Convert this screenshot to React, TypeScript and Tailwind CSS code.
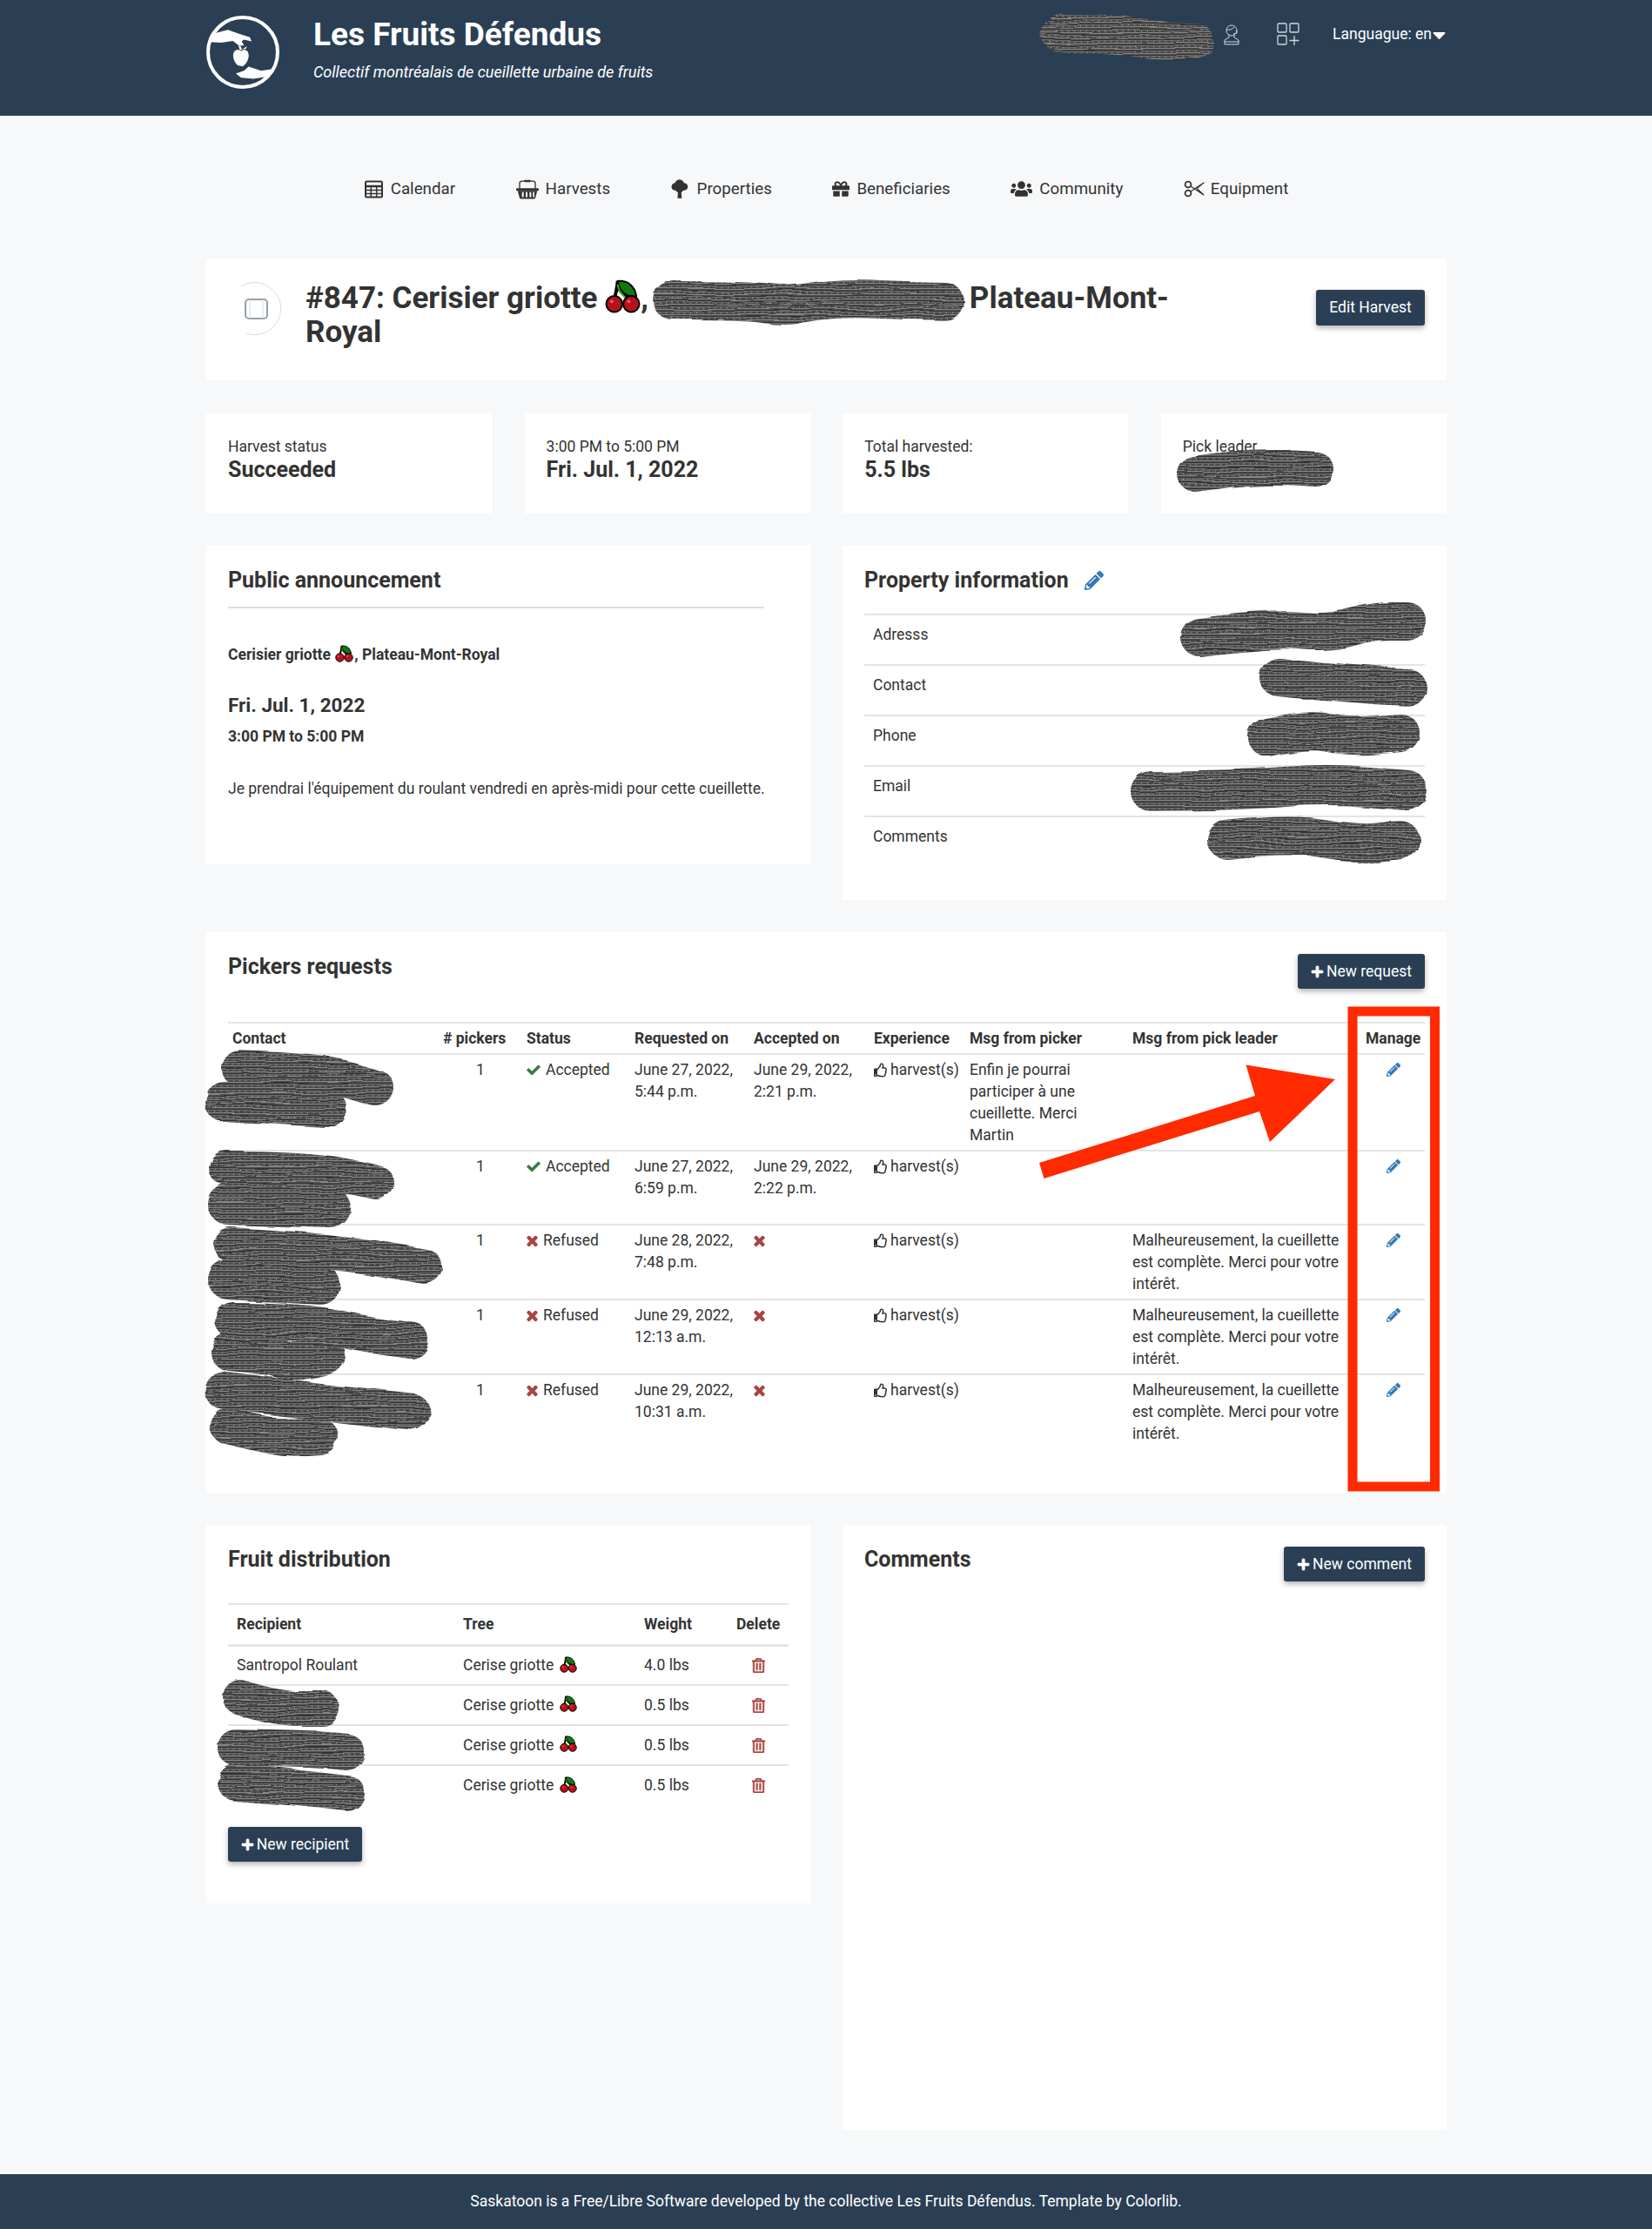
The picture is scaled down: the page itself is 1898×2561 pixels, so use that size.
import React from "react";
import {
  FaGift,
  FaUsers,
  FaPencilAlt,
  FaCheck,
  FaTimes,
  FaPlus,
  FaRegThumbsUp,
  FaRegTrashAlt,
  FaCaretDown,
} from "react-icons/fa";

const Cherry = ({ className }: { className: string }) => (
  <svg viewBox="0 0 40 40" className={`inline-block ${className}`}>
    <path d="M14 2 C13 12 12 18 9 25 M14 8 C17 16 24 20 29 25" fill="none" stroke="#000" strokeWidth="4" />
    <path d="M14 2 C24 1 34 6 36 20 C26 21 16 16 14 2Z" fill="#0f7a12" stroke="#000" strokeWidth="2" />
    <path d="M14 6 C15 14 19 18 26 24" fill="none" stroke="#35b31a" strokeWidth="2" />
    <circle cx="10" cy="29" r="9.5" fill="#b5121b" stroke="#000" strokeWidth="2" />
    <circle cx="30" cy="29" r="9.5" fill="#b5121b" stroke="#000" strokeWidth="2" />
    <circle cx="7" cy="26" r="2" fill="#ef5a68" />
    <circle cx="27" cy="26" r="2" fill="#ef5a68" />
  </svg>
);

const Logo = () => (
  <svg viewBox="21 24 250 250" className="h-[84px] w-[84px] shrink-0" fill="#fff">
    <circle cx="146" cy="149" r="119" fill="none" stroke="#fff" strokeWidth="12" />
    <path d="M36 88 L95 72 L130 85 L170 98 L176 112 L150 106 L142 112 L150 126 L132 126 L112 110 L72 116 L30 114Z" />
    <path d="M140 145 C150 136 166 140 166 160 C166 178 152 197 143 197 C140 197 138 195 135 195 C126 197 113 178 113 160 C113 140 130 136 140 145Z" />
    <path d="M136 142 L131 127 L138 127 L143 140Z M143 139 L160 129 L157 137Z" />
    <path d="M122 222 L150 212 L166 198 L208 212 L250 206 L232 232 L182 240 L140 236Z" />
  </svg>
);

const Calendar = () => (
  <svg viewBox="0 0 21 21" className="h-[21px] w-[21px] shrink-0" fill="none" stroke="#333">
    <rect x="1" y="1.5" width="19" height="18" rx="1.5" strokeWidth="2" />
    <path d="M1 7 H20" strokeWidth="2.5" />
    <path d="M1 11.5 H20 M1 15.5 H20 M7.3 7 V20 M13.7 7 V20" strokeWidth="1.5" />
  </svg>
);

const Basket = () => (
  <svg viewBox="0 0 78 68" className="h-[23px] w-[26px] shrink-0" fill="#333">
    <path d="M12 32 L12 14 Q12 6 20 6 L58 6 Q66 6 66 14 L66 32" fill="none" stroke="#333" strokeWidth="4" />
    <rect x="28" y="2" width="22" height="7" rx="2" />
    <rect x="0" y="30" width="78" height="9" rx="3" />
    <path d="M5 39 L73 39 L66 64 Q65 67 61 67 L17 67 Q13 67 12 64Z" />
    <path d="M20 44 h6 v17 h-6Z M33 44 h6 v17 h-6Z M46 44 h6 v17 h-6Z M58 44 h5 v17 h-5Z" fill="#f7f8fa" />
  </svg>
);

const Tree = () => (
  <svg viewBox="0 0 60 70" className="h-[23px] w-[20px] shrink-0" fill="#333">
    <circle cx="29" cy="17" r="16" />
    <circle cx="14" cy="26" r="13" />
    <circle cx="45" cy="26" r="13" />
    <circle cx="29" cy="32" r="15" />
    <path d="M24 40 L35 40 L37 66 L22 66Z" />
  </svg>
);

const Scissors = () => (
  <svg viewBox="0 0 24 20" className="h-[20px] w-[24px] shrink-0" fill="none" stroke="#333">
    <circle cx="5" cy="5" r="3.4" strokeWidth="1.8" />
    <circle cx="5" cy="15" r="3.4" strokeWidth="1.8" />
    <path d="M8 7 L23 17 L15 9.5 L23 3 L8 13" strokeWidth="1.2" strokeLinejoin="round" />
  </svg>
);

const Btn = ({ label, className }: { label: string; className: string }) => (
  <button className={`flex h-[40px] items-center justify-center gap-[3px] rounded-[3px] bg-[#2a3f54] text-white shadow-[0_3px_6px_rgba(0,0,0,0.3)] ${className}`}>
    <FaPlus className="h-[15px] w-[15px] stroke-[30]" />
    {label}
  </button>
);

const RedX = ({ className = "" }: { className?: string }) => (
  <FaTimes className={`h-[16px] w-[13px] stroke-[40] text-[#a94442] ${className}`} />
);

const nav = [
  { label: "Calendar", icon: <Calendar />, gap: "gap-[9px]" },
  { label: "Harvests", icon: <Basket />, gap: "gap-[8px]" },
  { label: "Properties", icon: <Tree />, gap: "gap-[10px]" },
  { label: "Beneficiaries", icon: <FaGift className="h-[20px] w-[20px]" />, gap: "gap-[8px]" },
  { label: "Community", icon: <FaUsers className="h-[24px] w-[25px]" />, gap: "gap-[8px]" },
  { label: "Equipment", icon: <Scissors />, gap: "gap-[7px]" },
];

const refuse = "Malheureusement, la cueillette est complète. Merci pour votre intérêt.";

const rows = [
  { ok: true, req: ["June 27, 2022,", "5:44 p.m."], acc: ["June 29, 2022,", "2:21 p.m."], picker: "Enfin je pourrai participer à une cueillette. Merci Martin", leader: "" },
  { ok: true, req: ["June 27, 2022,", "6:59 p.m."], acc: ["June 29, 2022,", "2:22 p.m."], picker: "", leader: "" },
  { ok: false, req: ["June 28, 2022,", "7:48 p.m."], acc: [], picker: "", leader: refuse },
  { ok: false, req: ["June 29, 2022,", "12:13 a.m."], acc: [], picker: "", leader: refuse },
  { ok: false, req: ["June 29, 2022,", "10:31 a.m."], acc: [], picker: "", leader: refuse },
];

const heads = [
  ["Contact", "w-[242px]"],
  ["# pickers", "w-[96px]"],
  ["Status", "w-[124px]"],
  ["Requested on", "w-[137px]"],
  ["Accepted on", "w-[138px]"],
  ["Experience", "w-[110px]"],
  ["Msg from picker", "w-[187px]"],
  ["Msg from pick leader", "w-[268px]"],
  ["Manage", "w-[73px]"],
];

const fruit = [
  ["Santropol Roulant", "4.0 lbs"],
  ["", "0.5 lbs"],
  ["", "0.5 lbs"],
  ["", "0.5 lbs"],
];

// redaction strokes, in page coordinates
const scribbles: [number[][], number][] = [
  [[[1218, 38], [1280, 38], [1330, 48], [1373, 48]], 44],
  [[[772, 345], [860, 345], [900, 352], [960, 342], [1040, 345], [1085, 346]], 44],
  [[[1373, 545], [1430, 537], [1480, 537], [1512, 539]], 40],
  [[[1378, 732], [1462, 722], [1529, 728], [1578, 714], [1617, 714]], 44],
  [[[1469, 778], [1560, 787], [1617, 790]], 44],
  [[[1456, 847], [1502, 837], [1551, 847], [1609, 842]], 44],
  [[[1322, 909], [1426, 908], [1525, 900], [1617, 908]], 46],
  [[[1409, 965], [1484, 957], [1560, 970], [1609, 965]], 44],
  [[[276, 1228], [368, 1231], [432, 1250]], 42],
  [[[258, 1266], [375, 1273]], 46],
  [[[260, 1342], [352, 1342], [432, 1358]], 40],
  [[[262, 1384], [380, 1388]], 46],
  [[[265, 1430], [383, 1437], [488, 1455]], 40],
  [[[262, 1470], [368, 1476]], 46],
  [[[268, 1517], [352, 1518], [418, 1533], [472, 1540]], 42],
  [[[264, 1553], [312, 1557], [335, 1566], [375, 1557]], 44],
  [[[256, 1597], [335, 1607], [472, 1622]], 43],
  [[[262, 1638], [318, 1653], [367, 1650]], 42],
  [[[276, 1950], [317, 1963], [370, 1963]], 40],
  [[[271, 2008], [368, 2010], [398, 2013]], 42],
  [[[271, 2048], [336, 2053], [398, 2060]], 42],
];

// rounds the corners of a stroke through its points
const smooth = (pts: number[][]) => {
  let d = `M${pts[0][0]} ${pts[0][1]}`;
  for (let i = 1; i < pts.length - 1; i++) {
    const mx = (pts[i][0] + pts[i + 1][0]) / 2;
    const my = (pts[i][1] + pts[i + 1][1]) / 2;
    d += ` Q${pts[i][0]} ${pts[i][1]} ${mx} ${my}`;
  }
  const last = pts[pts.length - 1];
  return `${d} L${last[0]} ${last[1]}`;
};

const Overlay = () => (
  <svg width="1898" height="2561" viewBox="0 0 1898 2561" className="pointer-events-none absolute left-0 top-0">
    <defs>
      <pattern id="scrawl" patternUnits="userSpaceOnUse" width="7" height="6">
        <rect width="7" height="6" fill="#505050" />
        <rect y="1" width="7" height="1" fill="#868686" />
        <rect y="3" width="7" height="1" fill="#333" />
        <rect y="4" width="7" height="1" fill="#6a6a6a" />
        <rect x="2" y="5" width="1" height="1" fill="#999" />
        <rect x="5" y="0" width="1" height="1" fill="#2b2b2b" />
      </pattern>
      <filter id="rough" filterUnits="userSpaceOnUse" x="0" y="0" width="1898" height="2561">
        <feTurbulence type="fractalNoise" baseFrequency="0.015 0.06" numOctaves="2" seed="4" />
        <feDisplacementMap in="SourceGraphic" scale="7" />
      </filter>
    </defs>
    <g filter="url(#rough)">
      {scribbles.map(([pts, w]) => (
        <path
          key={pts.join()}
          d={smooth(pts)}
          fill="none"
          stroke="url(#scrawl)"
          strokeWidth={w}
          strokeLinecap="round"
          strokeLinejoin="round"
        />
      ))}
    </g>
    <polygon
      points="1194,1336 1199.5,1354 1447,1277 1459,1312 1534,1240 1431.5,1223.5 1442,1259"
      fill="#ff2a00"
    />
    <rect x="1554" y="1162" width="94.5" height="546" fill="none" stroke="#ff2a00" strokeWidth="11" />
  </svg>
);

const App = () => {
  return (
    <div className="relative min-h-[2561px] bg-[#f7f8fa] font-[Roboto,sans-serif] text-[17.5px] leading-[25px] text-[#333]">
      <header className="h-[133px] bg-[#2a3f54] text-white">
        <div className="ml-[237px] flex w-[1425px] items-start">
          <div className="mt-[18px]">
            <Logo />
          </div>
          <div className="ml-[39px]">
            <h1 className="mt-[18px] text-[37px] font-bold leading-[44px]">Les Fruits Défendus</h1>
            <p className="mt-[9px] text-[18px] italic leading-[24px]">Collectif montréalais de cueillette urbaine de fruits</p>
          </div>
          <div className="ml-auto mt-[27px] flex items-center">
            <svg viewBox="0 0 18 24" className="h-[24px] w-[18px]" fill="none" stroke="#cfd6dc" strokeWidth="1">
              <circle cx="9" cy="7" r="6" />
              <path d="M3 6 Q9 7 12 3 M15 7 L15 10 L11 11" />
              <path d="M6 12 L6 15 L1 18 L1 23 L17 23 L17 18 L12 15 L12 12 M1 20 L17 20" />
            </svg>
            <svg viewBox="0 0 26 26" className="-mt-[2px] ml-[43px] h-[26px] w-[26px]" fill="none" stroke="#cfd6dc" strokeWidth="1.3">
              <rect x="1" y="1" width="10" height="10" rx="1" />
              <rect x="15" y="1" width="10" height="10" rx="1" />
              <rect x="1" y="15" width="10" height="10" rx="1" />
              <path d="M20 15 L20 26 M14.5 20.5 L25.5 20.5" />
            </svg>
            <span className="ml-[38px] flex items-center">
              Languague: en
              <FaCaretDown className="h-[24px] w-[17px] shrink-0" />
            </span>
          </div>
        </div>
      </header>

      <main className="ml-[237px] w-[1425px]">
        <nav className="flex h-[165px] items-center justify-center gap-[69.5px] pt-[3px] text-[18.75px]">
          {nav.map((n) => (
            <a key={n.label} className={`flex items-center ${n.gap}`}>
              {n.icon}
              <span>{n.label}</span>
            </a>
          ))}
        </nav>

        <section className="flex h-[139px] items-start bg-white">
          <svg viewBox="0 0 64 64" className="ml-[26px] mt-[25px] h-[64px] w-[64px] shrink-0" fill="none">
            <path d="M14 6 A30 30 0 1 1 20 60" stroke="#d8dce0" strokeWidth="1" />
            <rect x="19" y="21" width="25" height="22" rx="4" stroke="#93a1af" strokeWidth="2" />
            <path d="M24 21 L24 43 M39 21 L39 43" stroke="#d8dce0" strokeWidth="1" />
          </svg>
          <h2 className="ml-[24px] mt-[25px] text-[35px] font-bold leading-[39px]">
            #847: Cerisier griotte <Cherry className="-mt-2 h-[39px] w-[41px] align-middle" />,
            <span className="inline-block w-[369px]" />
            Plateau-Mont-
            <br />
            Royal
          </h2>
          <button className="ml-auto mr-[25px] mt-[35px] h-[41px] w-[125px] shrink-0 rounded-[3px] bg-[#2a3f54] text-white shadow-[0_3px_6px_rgba(0,0,0,0.3)]">
            Edit Harvest
          </button>
        </section>

        <section className="mt-[38px] grid grid-cols-4 gap-x-[37.33px]">
          {[
            ["Harvest status", "Succeeded"],
            ["3:00 PM to 5:00 PM", "Fri. Jul. 1, 2022"],
            ["Total harvested:", "5.5 lbs"],
            ["Pick leader", ""],
          ].map(([label, value]) => (
            <div key={label} className="h-[115px] bg-white pl-[25px] pt-[26px]">
              <p className="leading-[25px]">{label}</p>
              <p className="text-[25px] font-bold leading-[28px]">{value}</p>
            </div>
          ))}
        </section>

        <section className="mt-[37px] grid grid-cols-2 items-start gap-x-[37px]">
          <div className="h-[366px] bg-white px-[25px] pt-[24px]">
            <h3 className="text-[25px] font-bold leading-[32px]">Public announcement</h3>
            <div className="mt-[14px] w-[616px] border-t-2 border-[#ddd]" />
            <p className="mt-[41px] font-bold">
              Cerisier griotte <Cherry className="-mt-1 h-[20px] w-[23px] align-middle" />, Plateau-Mont-Royal
            </p>
            <p className="mt-[30px] text-[22.5px] font-bold leading-[30px]">Fri. Jul. 1, 2022</p>
            <p className="mt-[9px] font-bold">3:00 PM to 5:00 PM</p>
            <p className="mt-[35px]">Je prendrai l'équipement du roulant vendredi en après-midi pour cette cueillette.</p>
          </div>

          <div className="h-[407px] bg-white px-[25px] pt-[24px]">
            <h3 className="flex items-center text-[25px] font-bold leading-[32px]">
              Property information
              <FaPencilAlt className="ml-[18px] h-[22px] w-[22px] text-[#337ab7]" />
            </h3>
            <div className="mt-[22px]">
              {["Adresss", "Contact", "Phone", "Email", "Comments"].map((label) => (
                <div key={label} className="h-[58px] border-t-2 border-[#e4e4e4] pl-[10px] pt-[10px]">
                  {label}
                </div>
              ))}
            </div>
          </div>
        </section>

        <section className="mt-[37px] h-[644px] bg-white px-[25px]">
          <div className="flex h-[103px] items-start justify-between">
            <h3 className="mt-[24px] text-[25px] font-bold leading-[32px]">Pickers requests</h3>
            <Btn label="New request" className="mt-[25px] w-[146px]" />
          </div>
          <table className="w-[1375px] table-fixed border-collapse text-left">
            <thead>
              <tr className="border-y-2 border-[#e4e4e4]">
                {heads.map(([h, w]) => (
                  <th key={h} className={`h-[36px] px-[5px] font-bold ${w}`}>
                    {h}
                  </th>
                ))}
              </tr>
            </thead>
            <tbody>
              {rows.map((r, i) => (
                <tr key={i} className="border-b-2 border-[#e4e4e4] last:border-b-0">
                  <td className="h-[85px] px-[5px] pb-[4px] pt-[5px] align-top" />
                  <td className="px-[5px] pb-[4px] pt-[5px] text-center align-top">1</td>
                  <td className="px-[5px] pb-[4px] pt-[5px] align-top">
                    <span className="flex items-center gap-[6px]">
                      {r.ok ? <FaCheck className="h-[15px] w-[16px] stroke-[25] text-[#3c763d]" /> : <RedX />}
                      {r.ok ? "Accepted" : "Refused"}
                    </span>
                  </td>
                  <td className="px-[5px] pb-[4px] pt-[5px] align-top">
                    {r.req[0]}
                    <br />
                    {r.req[1]}
                  </td>
                  <td className="px-[5px] pb-[4px] pt-[5px] align-top">
                    {r.acc.length ? (
                      <>
                        {r.acc[0]}
                        <br />
                        {r.acc[1]}
                      </>
                    ) : (
                      <RedX className="mt-[5px]" />
                    )}
                  </td>
                  <td className="px-[5px] pb-[4px] pt-[5px] align-top">
                    <span className="flex items-center gap-[3px] whitespace-nowrap">
                      <FaRegThumbsUp className="h-[17px] w-[16px]" />
                      harvest(s)
                    </span>
                  </td>
                  <td className="px-[5px] pb-[4px] pt-[5px] align-top">{r.picker}</td>
                  <td className="px-[5px] pb-[4px] pt-[5px] align-top">{r.leader}</td>
                  <td className="px-[5px] pb-[4px] pt-[9px] align-top">
                    <FaPencilAlt className="mx-auto h-[16px] w-[16px] text-[#337ab7]" />
                  </td>
                </tr>
              ))}
            </tbody>
          </table>
        </section>

        <section className="mt-[37px] grid grid-cols-2 items-start gap-x-[37px]">
          <div className="h-[435px] bg-white px-[25px]">
            <h3 className="pt-[24px] text-[25px] font-bold leading-[32px]">Fruit distribution</h3>
            <table className="mt-[34px] w-[644px] table-fixed border-collapse text-left">
              <thead>
                <tr className="border-b-[3px] border-t-2 border-[#e4e4e4]">
                  <th className="h-[47px] w-[260px] px-[10px] font-bold">Recipient</th>
                  <th className="w-[208px] px-[10px] font-bold">Tree</th>
                  <th className="w-[106px] px-[10px] font-bold">Weight</th>
                  <th className="w-[70px] px-[10px] font-bold">Delete</th>
                </tr>
              </thead>
              <tbody>
                {fruit.map(([who, weight], i) => (
                  <tr key={i} className="border-b-2 border-[#e4e4e4] last:border-b-0">
                    <td className="h-[46px] px-[10px]">{who}</td>
                    <td className="px-[10px]">
                      Cerise griotte <Cherry className="-mt-1 ml-[2px] h-[19px] w-[20px] align-middle" />
                    </td>
                    <td className="px-[10px]">{weight}</td>
                    <td className="px-[10px]">
                      <FaRegTrashAlt className="mx-auto h-[17px] w-[15px] stroke-[15] text-[#a94442]" />
                    </td>
                  </tr>
                ))}
              </tbody>
            </table>
            <Btn label="New recipient" className="mt-[25px] w-[154px]" />
          </div>

          <div className="flex h-[695px] items-start justify-between bg-white px-[25px]">
            <h3 className="mt-[24px] text-[25px] font-bold leading-[32px]">Comments</h3>
            <Btn label="New comment" className="mt-[25px] w-[162px]" />
          </div>
        </section>
      </main>

      <footer className="mt-[51px] flex h-[63px] items-center justify-center bg-[#2a3f54] text-white">
        Saskatoon is a Free/Libre Software developed by the collective Les Fruits Défendus. Template by Colorlib.
      </footer>

      <Overlay />
    </div>
  );
};

export default App;
